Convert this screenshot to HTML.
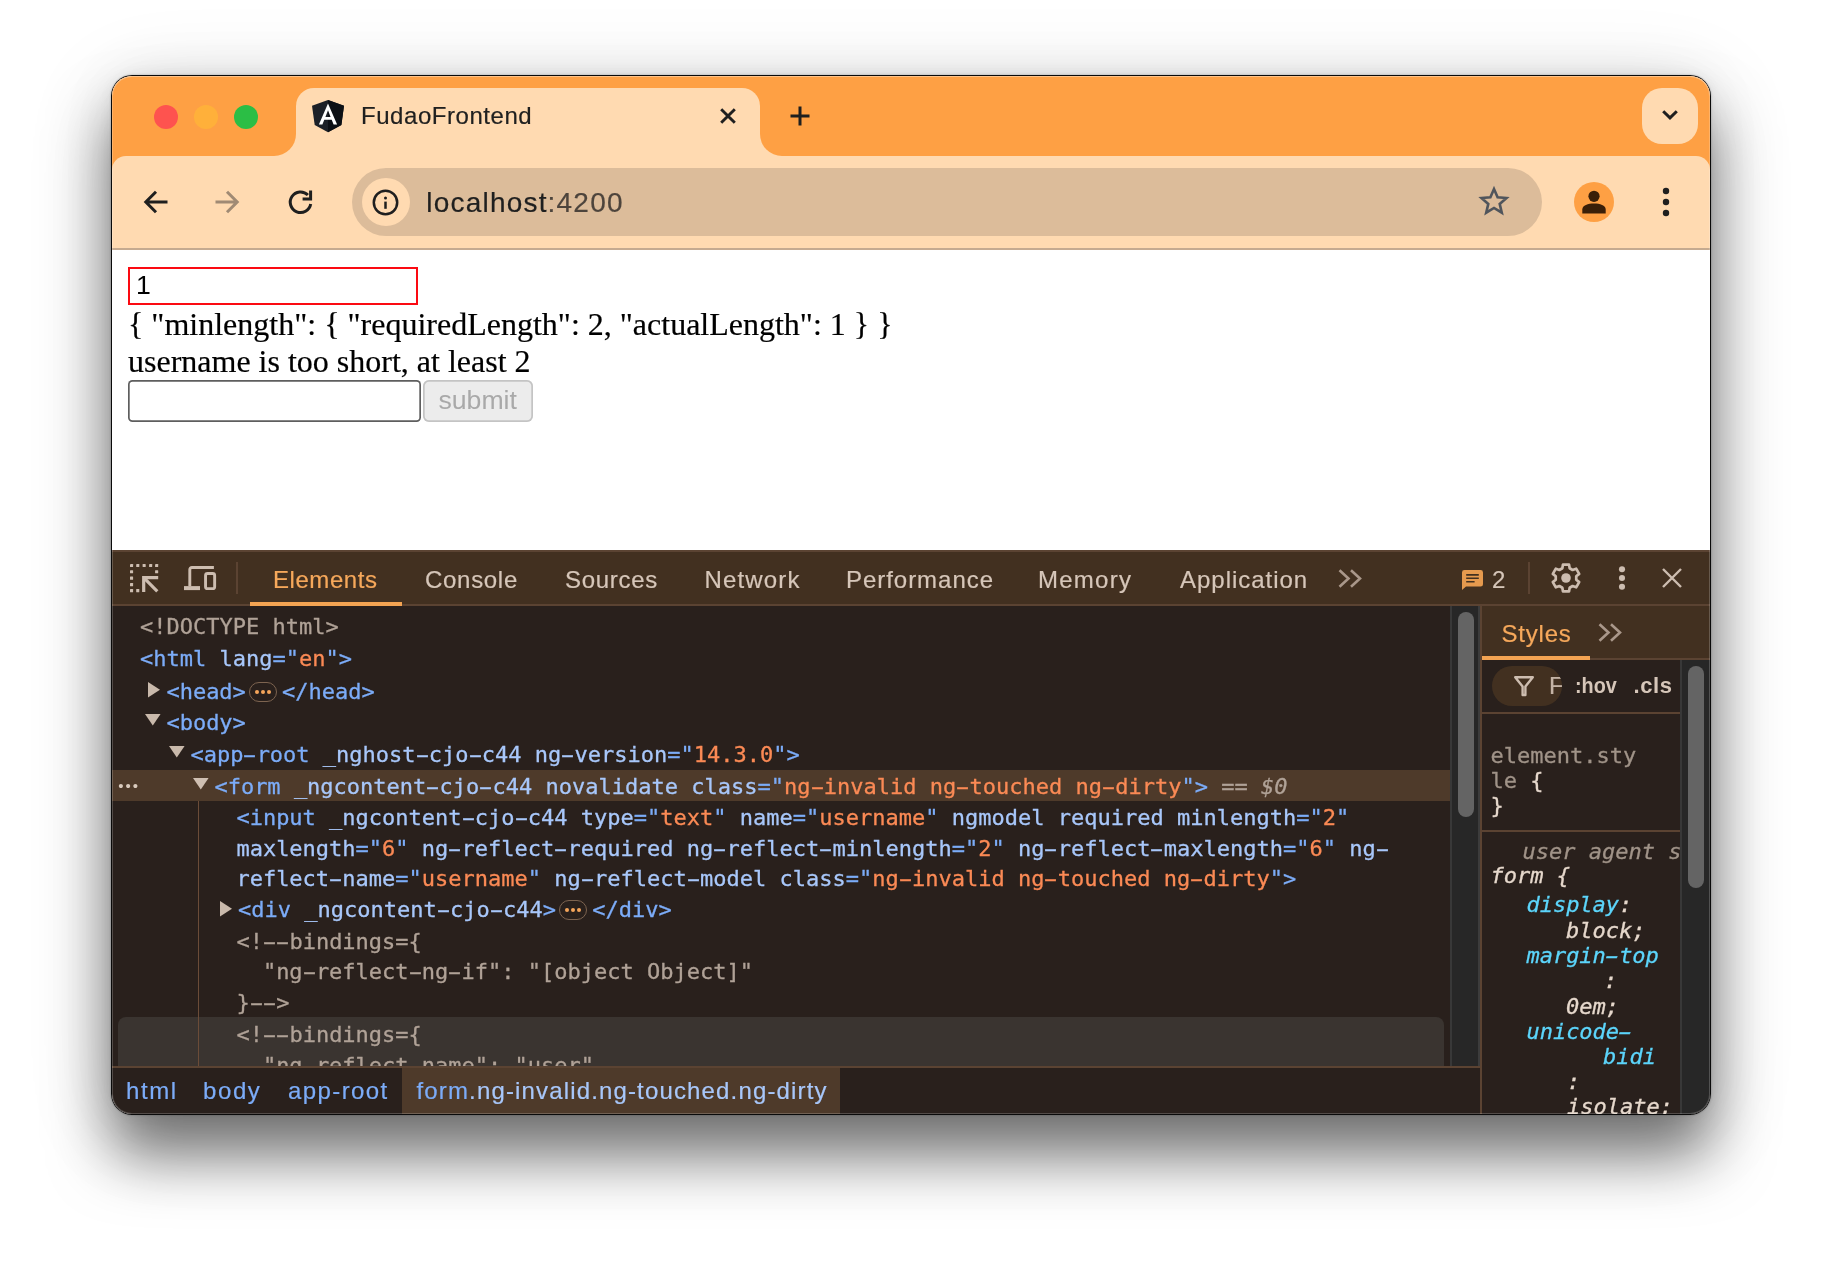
<!DOCTYPE html>
<html lang="en">
<head>
<meta charset="utf-8">
<title>FudaoFrontend</title>
<style>
*{box-sizing:border-box;margin:0;padding:0}
html,body{width:1822px;height:1262px;background:#fff;overflow:hidden}
body{position:relative;font-family:"Liberation Sans",sans-serif}
.abs,.pg *{position:absolute}
/* window */
#shadow{position:absolute;left:111px;top:75px;width:1600px;height:1040px;border-radius:21px;
  box-shadow:0 42px 60px rgba(0,0,0,.50),0 14px 90px rgba(0,0,0,.12),0 0 60px rgba(0,0,0,.06),0 0 14px rgba(0,0,0,.05),0 0 2px rgba(0,0,0,.30)}
#border{position:absolute;left:111px;top:75px;width:1600px;height:1040px;border-radius:21px;background:#0a0a0a}
#win{position:absolute;left:112px;top:76px;width:1598px;height:1038px;border-radius:20px;overflow:hidden;background:#fff}
.pg{position:absolute;left:-112px;top:-76px;width:1822px;height:1262px;will-change:transform}
#hl{position:absolute;left:112px;top:76px;width:1598px;height:1038px;border-radius:20px;
  box-shadow:inset 0 0 0 1px rgba(255,255,255,.2),inset 0 1px 0 rgba(255,255,255,.22);pointer-events:none}
/* chrome frame */
#frame{left:112px;top:76px;width:1598px;height:110px;background:#fea044}
.tl{width:24px;height:24px;border-radius:50%;top:105px}
#tab{left:296px;top:88px;width:464px;height:68px;background:#ffdab1;border-radius:18px 18px 0 0}
.flare{width:22px;height:22px;top:134px;background:#ffdab1}
.flare i{left:0;top:0;width:22px;height:22px;background:#fea044}
#toolbar{left:112px;top:156px;width:1598px;height:92px;background:#ffdab1;border-radius:14px 14px 0 0}
#tbsep{left:112px;top:248px;width:1598px;height:2px;background:#c5aa90}
#omni{left:352px;top:168px;width:1190px;height:68px;border-radius:34px;background:#dcbc9a}
#infoc{left:362px;top:178px;width:48px;height:48px;border-radius:50%;background:#ffdab1}
.ui{font-family:"Liberation Sans",sans-serif;white-space:nowrap;line-height:1}
#url{left:426.3px;top:189px;font-size:28px;letter-spacing:1.2px;-webkit-text-stroke:.2px;color:#1f1f1f}
#url span{position:static;color:#4d443c}
#title{left:361px;top:104px;font-size:24px;letter-spacing:.55px;-webkit-text-stroke:.2px;color:#1f1f1f}
#tsb{left:1642px;top:88px;width:56px;height:56px;border-radius:20px;background:#ffdab1}
#avatar{left:1574px;top:182px;width:40px;height:40px;border-radius:50%;background:#fea044}

/* page */
#page{left:112px;top:250px;width:1598px;height:300px;background:#fff}
.serif{font-family:"Liberation Serif",serif;font-size:32px;line-height:37px;color:#000;white-space:nowrap;left:128px;-webkit-text-stroke:.2px}
#in1{left:128px;top:267px;width:290px;height:38px;border:2px solid #fb0a12;background:#fff}
#in1 span{left:6px;top:1px;font-size:26.67px;line-height:30px;color:#000}
#in2{left:128px;top:379.9px;width:293.4px;height:42.6px;box-shadow:inset 0 0 0 1.7px #5e5e5e;border-radius:4.5px;background:#fff}
#btn{left:422.6px;top:379.9px;width:110.2px;height:42.6px;box-shadow:inset 0 0 0 1.7px #c4c4c4;border-radius:6px;background:#ececec;
  font-size:26.67px;line-height:41px;text-align:center;color:#a9a9a9}
/*DTCSS0*/
/* devtools */
#dt{left:112px;top:550px;width:1598px;height:564px;background:#29201c}
#dttop{left:112px;top:550px;width:1598px;height:2px;background:#5b4332}
#dtbar{left:112px;top:552px;width:1598px;height:52px;background:#423020}
#dtbarb{left:112px;top:604px;width:1598px;height:2px;background:#5b4332}
.tabt{font-family:"Liberation Sans",sans-serif;font-size:24px;line-height:28px;top:565.5px;color:#d6c6b9;white-space:nowrap;letter-spacing:.3px;-webkit-text-stroke:.2px}
.vdiv{width:2px;top:562px;height:32px;background:#5b4332}
#eund{left:250px;top:602px;width:152px;height:4px;background:#f3a352}
.mono{font-family:"DejaVu Sans Mono","Liberation Mono",monospace;font-size:22px;white-space:pre;-webkit-text-stroke:.3px}
.ln{height:30px;line-height:30px}
.ln *{position:static}
.t{color:#7cacf8}.an{color:#a8c7fa}.av{color:#fb8a55}.c{color:#b0a297}.g{color:#a09388}.w{color:#e6d8cc}
#selrow{left:112px;top:770px;width:1338px;height:31px;background:#4e3a2a}
#hov{left:118px;top:1017px;width:1326px;height:60px;background:#3a3430;border-radius:8px 8px 0 0}
#guide{left:198px;top:801px;width:1.4px;height:265px;background:#6b4c38}
.pill{width:28px;height:20px;border:1.6px solid #7d6450;border-radius:10px}
.pill b{width:4px;height:4px;border-radius:50%;background:#f5a55a;top:6.5px}
#strack{left:1450px;top:606px;width:30px;height:460px;background:#272727;border-left:2px solid #383838;border-right:2px solid #3c3c3c}
#sthumb{left:1458px;top:612px;width:16px;height:205px;border-radius:8px;background:#646464}
#split{left:1480px;top:606px;width:2px;height:508px;background:#5b4332}
#bcb{left:112px;top:1066px;width:1368px;height:2px;background:#5b4332}
#bc{left:112px;top:1068px;width:1368px;height:46px;background:#29201c}
#bcsel{left:402px;top:1068px;width:438px;height:46px;background:#4e3a2a}
.bct{font-family:"Liberation Sans",sans-serif;font-size:24px;line-height:28px;top:1077px;color:#7cacf8;white-space:nowrap;letter-spacing:.6px;-webkit-text-stroke:.2px}
/* styles pane */
#sthead{left:1482px;top:606px;width:228px;height:52px;background:#423020}
#stheadb{left:1482px;top:658px;width:228px;height:2px;background:#5b4332}
#stund{left:1482px;top:656px;width:108px;height:4px;background:#f3a352}
#fpill{left:1492px;top:666px;width:70px;height:40px;border-radius:20px;background:#423020;overflow:hidden}
#fbarb{left:1482px;top:712px;width:198px;height:2px;background:#5b4332}
#secb{left:1482px;top:830px;width:198px;height:2px;background:#5b4332}
#strack2{left:1680px;top:660px;width:30px;height:454px;background:#272727;border-left:2px solid #383838}
#sthumb2{left:1688px;top:666px;width:16px;height:222px;border-radius:8px;background:#646464}
.sl{height:26px;line-height:26px}
.sl *{position:static}
.it{font-style:italic}
.hy{display:inline-block;font-style:inherit;transform:scaleX(1.85)}
.pn{color:#5cd5fb}
.cond{font-family:"Liberation Sans",sans-serif;font-size:22px;font-weight:bold;line-height:26px;color:#d6c6b9;top:673px;white-space:nowrap;transform:scaleX(.86);transform-origin:0 50%}
/*DTCSS1*/svg{overflow:visible}
</style>
</head>
<body>
<div id="shadow"></div>
<div id="border"></div>
<div id="win"><div class="pg">
  <!-- ===== tab strip ===== -->
  <div id="frame"></div>
  <div class="tl" style="left:154px;background:#fe534f"></div>
  <div class="tl" style="left:194px;background:#ffb03a"></div>
  <div class="tl" style="left:234px;background:#2bbe45"></div>
  <div id="toolbar"></div>
  <div id="tab"></div>
  <div class="flare" style="left:274px"><i style="border-radius:0 0 22px 0"></i></div>
  <div class="flare" style="left:760px"><i style="border-radius:0 0 0 22px"></i></div>
  <svg id="fav" style="left:312px;top:100px" width="32" height="32" viewBox="0 0 32 32">
    <path d="M16 0 L32 5.8 L29.4 25 L16 32.2 L2.7 25 L0 5.8 Z" fill="#1c2027"/>
    <path d="M16 0 L32 5.8 L29.4 25 L16 32.2 Z" fill="#0c0f14"/>
    <path d="M16 3.4 L6.9 24.4 H10.4 L12.3 19.8 H19.7 L21.6 24.4 H25.1 Z M16 10.2 L18.6 16.9 H13.4 Z" fill="#fff"/>
  </svg>
  <div id="title" class="ui">FudaoFrontend</div>
  <svg style="left:720px;top:108px" width="16" height="16" viewBox="0 0 16 16"><path d="M1.2 1.2 L14.8 14.8 M14.8 1.2 L1.2 14.8" stroke="#1f1f1f" stroke-width="2.9" fill="none"/></svg>
  <svg style="left:790px;top:106px" width="20" height="20" viewBox="0 0 20 20"><path d="M10 0.5 V19.5 M0.5 10 H19.5" stroke="#1f1f1f" stroke-width="3" fill="none"/></svg>
  <div id="tsb"></div>
  <svg style="left:1659px;top:108px" width="22" height="14" viewBox="0 0 22 14"><path d="M4.2 3.2 L11 9.9 L17.8 3.2" stroke="#1f1f1f" stroke-width="3" fill="none"/></svg>
  <!-- ===== toolbar ===== -->
  <svg style="left:143px;top:190px" width="26" height="24" viewBox="0 0 26 24"><path d="M24.5 12 H3.5 M13 1.8 L2.8 12 L13 22.2" stroke="#1f1f1f" stroke-width="3" fill="none" stroke-linejoin="miter"/></svg>
  <svg style="left:214px;top:190px" width="26" height="24" viewBox="0 0 26 24"><path d="M1.5 12 H22.5 M13 1.8 L23.2 12 L13 22.2" stroke="#a08a74" stroke-width="3" fill="none"/></svg>
  <svg style="left:287px;top:189px" width="26" height="26" viewBox="0 0 26 26"><path d="M23.7 15 A10.3 10.3 0 1 1 20.9 6" stroke="#1f1f1f" stroke-width="3" fill="none"/><path d="M23.6 1.4 V10 H15.6" stroke="#1f1f1f" stroke-width="3" fill="none"/></svg>
  <div id="omni"></div>
  <div id="infoc"></div>
  <svg style="left:372px;top:189px" width="27" height="27" viewBox="0 0 27 27"><circle cx="13.5" cy="13.5" r="11.7" stroke="#1f1f1f" stroke-width="2.5" fill="none"/><path d="M13.5 12.6 V19.8" stroke="#1f1f1f" stroke-width="2.5"/><circle cx="13.5" cy="8.9" r="1.5" fill="#1f1f1f"/></svg>
  <div id="url" class="ui">localhost<span>:4200</span></div>
  <svg style="left:1479px;top:186px" width="30" height="30" viewBox="0 0 30 30"><path d="M15 3 L18.6 11.2 L27.5 12 L20.7 17.9 L22.8 26.7 L15 22 L7.2 26.7 L9.3 17.9 L2.5 12 L11.4 11.2 Z" stroke="#50555c" stroke-width="2.6" fill="none" stroke-linejoin="miter"/></svg>
  <div id="avatar"></div>
  <svg style="left:1582px;top:190px" width="24" height="24" viewBox="0 0 24 24"><circle cx="12" cy="6.3" r="5.6" fill="#3a1f08"/><path d="M0.3 23.5 V19.6 C0.3 15 6 13.4 12 13.4 C18 13.4 23.7 15 23.7 19.6 V23.5 Z" fill="#3a1f08"/></svg>
  <svg style="left:1662px;top:187px" width="8" height="30" viewBox="0 0 8 30"><circle cx="4" cy="4" r="3.2" fill="#1f1f1f"/><circle cx="4" cy="15" r="3.2" fill="#1f1f1f"/><circle cx="4" cy="26" r="3.2" fill="#1f1f1f"/></svg>
  <div id="tbsep"></div>
  <div id="page"></div>
  <div id="in1"><span>1</span></div>
  <div class="serif" style="top:306px">{ "minlength": { "requiredLength": 2, "actualLength": 1 } }</div>
  <div class="serif" style="top:343px">username is too short, at least 2</div>
  <div id="in2"></div>
  <div id="btn">submit</div>

  <!--DT0--><div id="dt"></div><div id="dttop"></div><div id="dtbar"></div><div id="dtbarb"></div>
  <svg style="left:130px;top:564px" width="28.2" height="28.2" viewBox="0 0 28.2 28.2"><rect x="0" y="0" width="3.1" height="3.1" rx=".5" fill="#cdbdb0"/><rect x="0" y="6.2" width="3.1" height="3.1" rx=".5" fill="#cdbdb0"/><rect x="0" y="12.6" width="3.1" height="3.1" rx=".5" fill="#cdbdb0"/><rect x="0" y="19.1" width="3.1" height="3.1" rx=".5" fill="#cdbdb0"/><rect x="0" y="25.1" width="3.1" height="3.1" rx=".5" fill="#cdbdb0"/><rect x="6.2" y="0" width="3.1" height="3.1" rx=".5" fill="#cdbdb0"/><rect x="6.2" y="25.1" width="3.1" height="3.1" rx=".5" fill="#cdbdb0"/><rect x="12.6" y="0" width="3.1" height="3.1" rx=".5" fill="#cdbdb0"/><rect x="19.1" y="0" width="3.1" height="3.1" rx=".5" fill="#cdbdb0"/><rect x="25.1" y="0" width="3.1" height="3.1" rx=".5" fill="#cdbdb0"/><rect x="25.1" y="6.2" width="3.1" height="3.1" rx=".5" fill="#cdbdb0"/><path d="M28.2 13.7 H13.7 V28.1" stroke="#cdbdb0" stroke-width="3.2" fill="none"/><path d="M14.2 14.2 L27.3 27.3" stroke="#cdbdb0" stroke-width="3.2" fill="none"/></svg>
  <svg style="left:184px;top:565px" width="33" height="26" viewBox="0 0 33 26"><path d="M5.8 21.2 V4.6 A2.1 2.1 0 0 1 7.9 2.5 H29.9" stroke="#cdbdb0" stroke-width="2.9" fill="none"/><rect x="0" y="21.1" width="16" height="4" fill="#cdbdb0"/><rect x="21.55" y="8.55" width="9.1" height="15.1" rx="2" stroke="#cdbdb0" stroke-width="2.9" fill="none"/></svg>
  <div class="vdiv" style="left:236px"></div>
  <div class="tabt" style="left:273px;letter-spacing:0.55px;color:#f6a85b">Elements</div>
  <div class="tabt" style="left:425px;letter-spacing:0.7px">Console</div>
  <div class="tabt" style="left:565px;letter-spacing:0.7px">Sources</div>
  <div class="tabt" style="left:704.5px;letter-spacing:1.15px">Network</div>
  <div class="tabt" style="left:846px;letter-spacing:0.96px">Performance</div>
  <div class="tabt" style="left:1038px;letter-spacing:1.26px">Memory</div>
  <div class="tabt" style="left:1180px;letter-spacing:0.98px">Application</div>
  <div id="eund"></div>
  <svg style="left:1338px;top:568.5px" width="24" height="19" viewBox="0 0 24 19"><path d="M1.5 1.2 L10.5 9.5 L1.5 17.8 M13 1.2 L22 9.5 L13 17.8" stroke="#a9978a" stroke-width="2.6" fill="none"/></svg>
  <svg style="left:1462px;top:570px" width="21" height="20" viewBox="0 0 21 20"><path d="M2.4 0 H18.6 A2.4 2.4 0 0 1 21 2.4 V14.2 A2.4 2.4 0 0 1 18.6 16.6 H4 L0 20 V2.4 A2.4 2.4 0 0 1 2.4 0 Z" fill="#e69a4e"/><path d="M4.2 4.9 H16.8 M4.2 8.3 H16.8 M4.2 11.7 H12.6" stroke="#423020" stroke-width="1.6"/></svg>
  <div class="tabt" style="left:1492px;letter-spacing:0">2</div>
  <div class="vdiv" style="left:1528px"></div>
  <svg style="left:1550px;top:562px" width="32" height="32" viewBox="0 0 32 32"><path d="M12.34 6.27 L12.99 2.53 L19.01 2.53 L19.66 6.27 L22.60 7.96 L26.16 6.66 L29.17 11.87 L26.26 14.31 L26.26 17.69 L29.17 20.13 L26.16 25.34 L22.60 24.04 L19.66 25.73 L19.01 29.47 L12.99 29.47 L12.34 25.73 L9.40 24.04 L5.84 25.34 L2.83 20.13 L5.74 17.69 L5.74 14.31 L2.83 11.87 L5.84 6.66 L9.40 7.96 Z" stroke="#cdbdb0" stroke-width="2.7" fill="none" stroke-linejoin="round"/><circle cx="16" cy="16" r="4.8" fill="#cdbdb0"/></svg>
  <svg style="left:1618px;top:565px" width="8" height="26" viewBox="0 0 8 26"><circle cx="4" cy="4.3" r="3.05" fill="#cdbdb0"/><circle cx="4" cy="13" r="3.05" fill="#cdbdb0"/><circle cx="4" cy="21.7" r="3.05" fill="#cdbdb0"/></svg>
  <svg style="left:1662px;top:568px" width="20" height="20" viewBox="0 0 20 20"><path d="M1 1 L19 19 M19 1 L1 19" stroke="#cdbdb0" stroke-width="2.4" fill="none"/></svg>
  <div id="selrow"></div><div id="hov"></div><div id="guide"></div>
  <div class="ln mono" style="left:140px;top:612.4px"><span class="c">&lt;!DOCTYPE html&gt;</span></div>
  <div class="ln mono" style="left:140px;top:644.4px"><span class="t">&lt;html </span><span class="an">lang</span><span class="t">="</span><span class="av">en</span><span class="t">"</span><span class="t">&gt;</span></div>
  <svg style="left:147.5px;top:682px" width="12" height="15.4" viewBox="0 0 12 15.4"><path d="M0 0 L12 7.7 L0 15.4 Z" fill="#c9b9ab"/></svg>
  <div class="ln mono" style="left:166.4px;top:676.9px"><span class="t">&lt;head&gt;</span></div>
  <div class="pill" style="left:249px;top:682px"><b style="left:4.5px"></b><b style="left:10.6px"></b><b style="left:16.8px"></b></div>
  <div class="ln mono" style="left:282px;top:676.9px"><span class="t">&lt;/head&gt;</span></div>
  <svg style="left:145px;top:713.5px" width="15.6" height="11.6" viewBox="0 0 15.6 11.6"><path d="M0 0 H15.6 L7.8 11.6 Z" fill="#c9b9ab"/></svg>
  <div class="ln mono" style="left:166.4px;top:708.4px"><span class="t">&lt;body&gt;</span></div>
  <svg style="left:169px;top:745.5px" width="15.6" height="11.6" viewBox="0 0 15.6 11.6"><path d="M0 0 H15.6 L7.8 11.6 Z" fill="#c9b9ab"/></svg>
  <div class="ln mono" style="left:190.4px;top:740.4px"><span class="t">&lt;app<i class="hy">-</i>root </span><span class="an">_nghost<i class="hy">-</i>cjo<i class="hy">-</i>c44</span> <span class="an">ng<i class="hy">-</i>version</span><span class="t">="</span><span class="av">14.3.0</span><span class="t">"</span><span class="t">&gt;</span></div>
  <div style="left:118.3px;top:776px;font-family:'Liberation Sans',sans-serif;font-size:15px;line-height:20px;letter-spacing:2px;color:#d9cabd;white-space:nowrap">•••</div>
  <svg style="left:193px;top:777.5px" width="15.6" height="11.6" viewBox="0 0 15.6 11.6"><path d="M0 0 H15.6 L7.8 11.6 Z" fill="#cfbfb2"/></svg>
  <div class="ln mono" style="left:214.4px;top:772px"><span class="t">&lt;form </span><span class="an">_ngcontent<i class="hy">-</i>cjo<i class="hy">-</i>c44</span> <span class="an">novalidate</span> <span class="an">class</span><span class="t">="</span><span class="av">ng<i class="hy">-</i>invalid ng<i class="hy">-</i>touched ng<i class="hy">-</i>dirty</span><span class="t">"</span><span class="t">&gt;</span><span class="c"> == </span><span class="c it">$0</span></div>
  <div class="ln mono" style="left:236.4px;top:803.4px"><span class="t">&lt;input </span><span class="an">_ngcontent<i class="hy">-</i>cjo<i class="hy">-</i>c44</span> <span class="an">type</span><span class="t">="</span><span class="av">text</span><span class="t">"</span> <span class="an">name</span><span class="t">="</span><span class="av">username</span><span class="t">"</span> <span class="an">ngmodel</span> <span class="an">required</span> <span class="an">minlength</span><span class="t">="</span><span class="av">2</span><span class="t">"</span></div>
  <div class="ln mono" style="left:236.4px;top:833.6px"><span class="an">maxlength</span><span class="t">="</span><span class="av">6</span><span class="t">"</span> <span class="an">ng<i class="hy">-</i>reflect<i class="hy">-</i>required</span> <span class="an">ng<i class="hy">-</i>reflect<i class="hy">-</i>minlength</span><span class="t">="</span><span class="av">2</span><span class="t">"</span> <span class="an">ng<i class="hy">-</i>reflect<i class="hy">-</i>maxlength</span><span class="t">="</span><span class="av">6</span><span class="t">"</span> <span class="an">ng<i class="hy">-</i></span></div>
  <div class="ln mono" style="left:236.4px;top:864px"><span class="an">reflect<i class="hy">-</i>name</span><span class="t">="</span><span class="av">username</span><span class="t">"</span> <span class="an">ng<i class="hy">-</i>reflect<i class="hy">-</i>model</span> <span class="an">class</span><span class="t">="</span><span class="av">ng<i class="hy">-</i>invalid ng<i class="hy">-</i>touched ng<i class="hy">-</i>dirty</span><span class="t">"</span><span class="t">&gt;</span></div>
  <svg style="left:220px;top:900.5px" width="12" height="15.4" viewBox="0 0 12 15.4"><path d="M0 0 L12 7.7 L0 15.4 Z" fill="#c9b9ab"/></svg>
  <div class="ln mono" style="left:238px;top:894.9px"><span class="t">&lt;div </span><span class="an">_ngcontent<i class="hy">-</i>cjo<i class="hy">-</i>c44</span><span class="t">&gt;</span></div>
  <div class="pill" style="left:559.356px;top:900px"><b style="left:4.5px"></b><b style="left:10.6px"></b><b style="left:16.8px"></b></div>
  <div class="ln mono" style="left:592.356px;top:894.9px"><span class="t">&lt;/div&gt;</span></div>
  <div class="ln mono" style="left:236.4px;top:926.9px"><span class="c">&lt;!<i class="hy">-</i><i class="hy">-</i>bindings={</span></div>
  <div class="ln mono" style="left:236.4px;top:957.4px"><span class="c">  "ng<i class="hy">-</i>reflect<i class="hy">-</i>ng<i class="hy">-</i>if": "[object Object]"</span></div>
  <div class="ln mono" style="left:236.4px;top:988px"><span class="c">}<i class="hy">-</i><i class="hy">-</i>&gt;</span></div>
  <div class="ln mono" style="left:236.4px;top:1020.2px"><span class="c">&lt;!<i class="hy">-</i><i class="hy">-</i>bindings={</span></div>
  <div class="ln mono" style="left:236.4px;top:1050.6px"><span class="c">  "ng<i class="hy">-</i>reflect<i class="hy">-</i>name": "user"</span></div>
  <div id="strack"></div><div id="sthumb"></div>
  <div id="bcb"></div><div id="bc"></div><div id="bcsel"></div>
  <div class="bct" style="left:126px;letter-spacing:1.6px">html</div>
  <div class="bct" style="left:203px;letter-spacing:1.6px">body</div>
  <div class="bct" style="left:288px;letter-spacing:1.4px">app-root</div>
  <div class="bct" style="left:416.5px;letter-spacing:1.15px">form<span style="position:static;color:#a8c7fa">.ng-invalid.ng-touched.ng-dirty</span></div>
  <div id="split"></div>
  <div id="sthead"></div><div id="stheadb"></div><div id="stund"></div>
  <div class="tabt" style="left:1502px;top:619.5px;left:1501.5px;letter-spacing:.8px;color:#f6a85b">Styles</div>
  <svg style="left:1598px;top:623px" width="24" height="19" viewBox="0 0 24 19"><path d="M1.5 1.2 L10.5 9.5 L1.5 17.8 M13 1.2 L22 9.5 L13 17.8" stroke="#a9978a" stroke-width="2.6" fill="none"/></svg>
  <div id="fpill"><svg style="left:22px;top:10px" width="20" height="20" viewBox="0 0 20 20"><path d="M1.2 1.3 H18.8 L11.4 10.6 V19 H8.6 V10.6 Z" stroke="#cdbdb0" stroke-width="2.4" fill="none" stroke-linejoin="round"/></svg><div class="tabt" style="left:57px;top:6px;color:#c4b3a5">Filter</div></div>
  <div class="cond" style="left:1575px;transform:scaleX(.9)">:hov</div><div class="cond" style="left:1633.5px;transform:scaleX(1);letter-spacing:.6px">.cls</div>
  <div id="fbarb"></div><div id="secb"></div>
  <div class="sl mono" style="left:1490.6px;top:742.6px"><span class="g">element.sty</span></div>
  <div class="sl mono" style="left:1490.6px;top:767.8px"><span class="g">le </span><span class="w">{</span></div>
  <div class="sl mono" style="left:1490.6px;top:793px"><span class="w">}</span></div>
  <div id="uaclip" style="left:1482px;top:836px;width:198px;height:30px;overflow:hidden"><div class="sl mono it" style="left:40.5px;top:3.3px"><span class="g">user agent stylesheet</span></div></div>
  <div class="sl mono it" style="left:1490.6px;top:863.3px"><span class="w">form {</span></div>
  <div class="sl mono it" style="left:1526.4px;top:891.8px"><span class="pn">display</span><span class="w">:</span></div>
  <div class="sl mono it" style="left:1566px;top:918px"><span class="w">block;</span></div>
  <div class="sl mono it" style="left:1526.4px;top:943.2px"><span class="pn">margin<i class="hy">-</i>top</span></div>
  <div class="sl mono it" style="left:1604px;top:968.4px"><span class="w">:</span></div>
  <div class="sl mono it" style="left:1566px;top:993.6px"><span class="w">0em;</span></div>
  <div class="sl mono it" style="left:1526.4px;top:1018.8px"><span class="pn">unicode<i class="hy">-</i></span></div>
  <div class="sl mono it" style="left:1603px;top:1044px"><span class="pn">bidi</span></div>
  <div class="sl mono it" style="left:1567px;top:1069.2px"><span class="w">:</span></div>
  <div class="sl mono it" style="left:1567px;top:1094.4px"><span class="w">isolate;</span></div>
  <div id="strack2"></div><div id="sthumb2"></div><!--DT1-->
</div></div>
<div id="hl"></div>
</body>
</html>
